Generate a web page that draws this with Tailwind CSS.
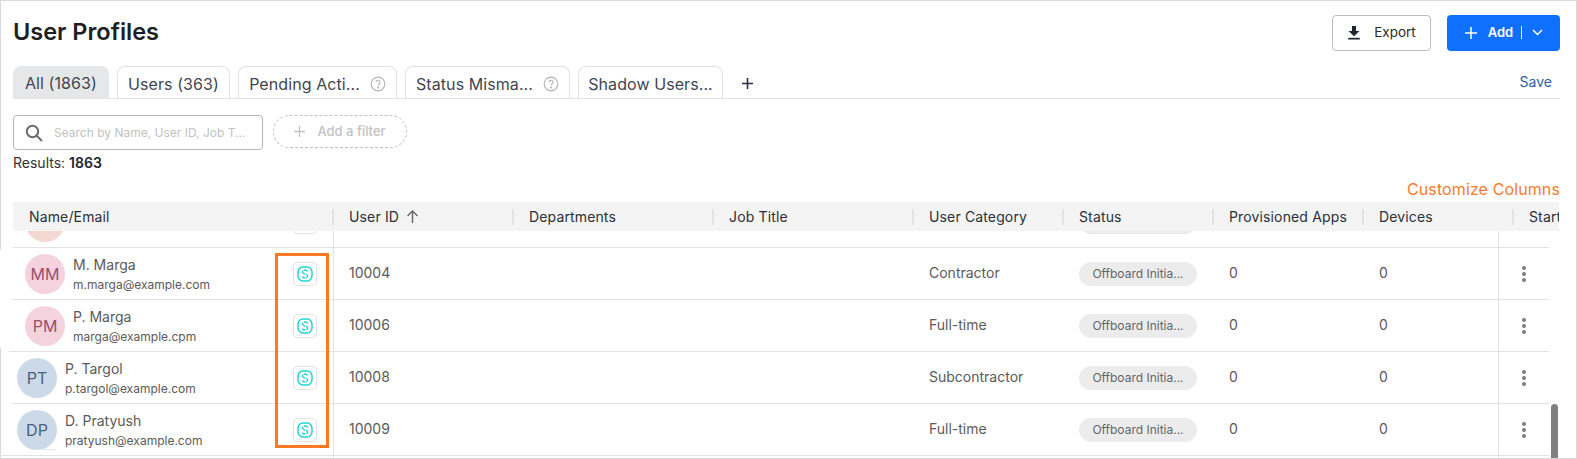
<!DOCTYPE html>
<html>
<head>
<meta charset="utf-8">
<script src="https://cdn.jsdelivr.net/npm/@tailwindcss/browser@4"></script>
</head>
<body class="bg-white">
<div class="relative w-[1577px] h-[459px] overflow-hidden bg-white font-['Inter','Liberation_Sans',sans-serif] border-t border-r border-b border-[#d9d9d9]">
  <span class="absolute left-0 top-0 w-[1px] h-[249px] bg-[#d9d9d9]"></span>
  <span class="absolute left-0 top-[347px] w-[1px] h-[110px] bg-[#d9d9d9]"></span>

  <!-- header -->
  <div class="flex items-center justify-between pl-[13px] pr-[16px] pt-[13px] h-[50px]">
    <h1 class="-mt-[2px] text-[23.500px] leading-[36px] font-semibold text-[#1c1f24]">User Profiles</h1>
    <div class="flex gap-[16px]">
      <button class="flex items-center justify-center gap-[13px] w-[99px] h-[36px] rounded-[4px] border border-[#bdbdbd] bg-white text-[13.500px] text-[#2b2b2b]">
        <svg width="14" height="14" viewBox="0 0 14 14" fill="#1f2430"><path d="M5 0h4v5h3.500L7 10.200 1.500 5H5z"/><rect x="1.200" y="11.800" width="11.600" height="1.700"/></svg>
        Export
      </button>
      <button class="flex items-center justify-center w-[113px] h-[36px] rounded-[4px] bg-[#0f6fff] text-[13px] font-semibold text-white">
        <svg width="14" height="14" viewBox="0 0 14 14" stroke="#fff" stroke-width="1.500" fill="none"><path d="M7 1v12M1 7h12"/></svg>
        <span class="ml-[10px]">Add</span>
        <span class="ml-[8px] w-[1px] h-[13px] bg-white"></span>
        <svg class="ml-[10px]" width="11" height="7" viewBox="0 0 11 7" stroke="#fff" stroke-width="1.500" fill="none"><path d="M1 1l4.500 4.500L10 1"/></svg>
      </button>
    </div>
  </div>

  <!-- tabs -->
  <div class="flex items-end mt-[15px] ml-[13px] mr-[16px] h-[33px] border-b border-[#e3e3e3] text-[16px] tracking-[0.005em] text-[#3f4652] whitespace-nowrap">
    <div class="flex items-center justify-center pt-[2px] w-[96px] h-[32px] rounded-t-[8px] bg-[#e6e7e9]">All (1863)</div>
    <div class="flex items-center justify-center pt-[2px] ml-[8px] w-[113px] h-[32px] rounded-t-[8px] border border-b-0 border-[#e3e3e3]">Users (363)</div>
    <div class="flex items-center justify-center pt-[2px] gap-[10px] ml-[8px] w-[159px] h-[32px] rounded-t-[8px] border border-b-0 border-[#e3e3e3]">Pending Acti...
      <svg width="16" height="16" viewBox="0 0 16 16" fill="none" stroke="#b5b5b5" stroke-width="1.200"><circle cx="8" cy="8" r="6.800"/><path d="M6 6.300a2 2 0 1 1 3 1.700c-.7.400-1 .8-1 1.500"/><circle cx="8" cy="11.600" r=".5" fill="#b5b5b5"/></svg>
    </div>
    <div class="flex items-center justify-center pt-[2px] gap-[10px] ml-[8px] w-[165px] h-[32px] rounded-t-[8px] border border-b-0 border-[#e3e3e3]">Status Misma...
      <svg width="16" height="16" viewBox="0 0 16 16" fill="none" stroke="#b5b5b5" stroke-width="1.200"><circle cx="8" cy="8" r="6.800"/><path d="M6 6.300a2 2 0 1 1 3 1.700c-.7.400-1 .8-1 1.500"/><circle cx="8" cy="11.600" r=".5" fill="#b5b5b5"/></svg>
    </div>
    <div class="flex items-center justify-center pt-[2px] ml-[8px] w-[145px] h-[32px] rounded-t-[8px] border border-b-0 border-[#e3e3e3]">Shadow Users...</div>
    <svg class="ml-[19px] mb-[9px]" width="11" height="11" viewBox="0 0 11 11" stroke="#2a2f45" stroke-width="1.600" fill="none"><path d="M5.500 0v11M0 5.500h11"/></svg>
    <span class="ml-auto mr-[8px] mb-[8px] text-[14px] tracking-normal leading-[16px] text-[#2f5fa8]">Save</span>
  </div>

  <!-- filters -->
  <div class="flex items-start gap-[10px] ml-[13px] mt-[16px]">
    <div class="flex items-center w-[250px] h-[35px] rounded-[4px] border border-[#b5b5b5] pl-[11px] overflow-hidden">
      <svg class="shrink-0" width="18" height="18" viewBox="0 0 18 18" fill="none" stroke="#6b6b6b" stroke-width="2"><circle cx="7.500" cy="7.500" r="5.700"/><path d="M11.700 11.700L17 17"/></svg>
      <span class="ml-[11px] text-[12px] text-[#c2c2c2] whitespace-nowrap">Search by Name, User ID, Job T...</span>
    </div>
    <div class="flex items-center justify-center gap-[12px] w-[134px] h-[33px] rounded-full border border-dashed border-[#c4c4c4] text-[13px] font-medium text-[#c2c2c2]">
      <svg width="11" height="11" viewBox="0 0 11 11" stroke="#c2c2c2" stroke-width="1.300" fill="none"><path d="M5.500 0v11M0 5.500h11"/></svg>
      Add a filter
    </div>
  </div>
  <p class="ml-[13px] mt-[3px] text-[14px] leading-[20px] text-[#333]">Results: <span class="font-semibold text-[#1f2430]">1863</span></p>

  <div class="mr-[16px] mt-[6px] text-right text-[16px] tracking-[0.007em] leading-[20px] text-[#f97a2b]">Customize Columns</div>

  <!-- table header -->
  <div class="ml-[13px] mr-[17px] mt-[3px] h-[29px] bg-[#f4f4f4] overflow-hidden grid grid-cols-[319px_180px_200px_200px_150px_150px_150px_150px_150px] items-center text-[14px] tracking-[0.01em] text-[#2a2f38] whitespace-nowrap">
    <div class="pl-[16px]">Name/Email</div>
    <div class="pl-[15px] border-l-2 border-[#e2e2e2] h-[16px] leading-[16px] flex items-center gap-[7px]">User ID
      <svg width="13" height="13" viewBox="0 0 13 13" fill="none" stroke="#666" stroke-width="1.400"><path d="M6.500 13V1M1.500 6L6.500 1l5 5"/></svg>
    </div>
    <div class="pl-[15px] border-l-2 border-[#e2e2e2] h-[16px] leading-[16px]">Departments</div>
    <div class="pl-[15px] border-l-2 border-[#e2e2e2] h-[16px] leading-[16px]">Job Title</div>
    <div class="pl-[15px] border-l-2 border-[#e2e2e2] h-[16px] leading-[16px]">User Category</div>
    <div class="pl-[15px] border-l-2 border-[#e2e2e2] h-[16px] leading-[16px]">Status</div>
    <div class="pl-[15px] border-l-2 border-[#e2e2e2] h-[16px] leading-[16px]">Provisioned Apps</div>
    <div class="pl-[15px] border-l-2 border-[#e2e2e2] h-[16px] leading-[16px]">Devices</div>
    <div class="pl-[15px] border-l-2 border-[#e2e2e2] h-[16px] leading-[16px]">Start Date</div>
  </div>

  <!-- table body -->
  <div class="relative h-[228px] overflow-hidden">
    <div class="mt-[-35px] text-[14px] text-[#5a5a5a]">
      <!-- clipped row -->
      <div class="ml-[13px] w-[1536px] h-[52px] border-b border-[#e3e3e3] grid grid-cols-[320px_730px_1fr] items-center">
        <div class="flex items-center justify-between pl-[12px] pr-[16px]">
          <span class="w-[40px] h-[40px] rounded-full bg-[#f4d9d2]"></span>
          <span class="w-[24px] h-[24px] rounded-[4px] border border-[#e3e3e3]"></span>
        </div>
        <div></div>
        <div class="pl-[16px]"><span class="block w-[118px] h-[24px] rounded-full bg-[#ececec] border border-[#e5e5e5]"></span></div>
      </div>

      <!-- M. Marga -->
      <div class="ml-[13px] w-[1536px] h-[52px] border-b border-[#e3e3e3] grid grid-cols-[320px_180px_200px_200px_150px_150px_150px_150px_36px] items-center">
        <div class="flex items-center pl-[12px] pr-[16px]">
          <span class="flex items-center justify-center w-[40px] h-[40px] rounded-full bg-[#f4d3df] text-[16px] text-[#99506f]">MM</span>
          <div class="ml-[8px] pt-[2px]"><p class="text-[14px] leading-[20px]">M. Marga</p><p class="text-[12px] leading-[20px]">m.marga@example.com</p></div>
          <span class="ml-auto flex items-center justify-center w-[24px] h-[24px] rounded-[4px] border border-[#e3e3e3]"><svg width="16" height="16" viewBox="0 0 16 16" fill="none" stroke="#1fd0d8" stroke-width="1.400"><rect x="1" y="1" width="14" height="14" rx="5"/><path d="M10.500 5.500c-.3-1-1.300-1.500-2.500-1.500-1.500 0-2.500.9-2.500 2 0 2.500 5 1.500 5 4 0 1.100-1 2-2.500 2-1.200 0-2.200-.5-2.500-1.500" stroke-dasharray="4.500 1"/></svg></span>
        </div>
        <div class="pl-[16px] pb-[2px]">10004</div><div></div><div></div>
        <div class="pl-[16px] pb-[2px]">Contractor</div>
        <div class="pl-[16px]"><span class="flex items-center justify-center w-[118px] h-[24px] rounded-full bg-[#ececec] text-[12px] text-[#666]">Offboard Initia...</span></div>
        <div class="pl-[16px] pb-[2px]">0</div><div class="pl-[16px] pb-[2px]">0</div>
        <div class="flex pl-[9px]"><svg width="4" height="16" viewBox="0 0 4 16" fill="#7a7a7a"><circle cx="2" cy="2" r="2"/><circle cx="2" cy="8" r="2"/><circle cx="2" cy="14" r="2"/></svg></div>
      </div>

      <!-- P. Marga -->
      <div class="ml-[9px] w-[1540px] pl-[4px] h-[52px] border-b border-[#e3e3e3] grid grid-cols-[320px_180px_200px_200px_150px_150px_150px_150px_36px] items-center">
        <div class="flex items-center pl-[12px] pr-[16px]">
          <span class="flex items-center justify-center w-[40px] h-[40px] rounded-full bg-[#f4d3df] text-[16px] text-[#99506f]">PM</span>
          <div class="ml-[8px] pt-[2px]"><p class="text-[14px] leading-[20px]">P. Marga</p><p class="text-[12px] leading-[20px]">marga@example.cpm</p></div>
          <span class="ml-auto flex items-center justify-center w-[24px] h-[24px] rounded-[4px] border border-[#e3e3e3]"><svg width="16" height="16" viewBox="0 0 16 16" fill="none" stroke="#1fd0d8" stroke-width="1.400"><rect x="1" y="1" width="14" height="14" rx="5"/><path d="M10.500 5.500c-.3-1-1.300-1.500-2.500-1.500-1.500 0-2.500.9-2.500 2 0 2.500 5 1.500 5 4 0 1.100-1 2-2.500 2-1.200 0-2.200-.5-2.500-1.500" stroke-dasharray="4.500 1"/></svg></span>
        </div>
        <div class="pl-[16px] pb-[2px]">10006</div><div></div><div></div>
        <div class="pl-[16px] pb-[2px]">Full-time</div>
        <div class="pl-[16px]"><span class="flex items-center justify-center w-[118px] h-[24px] rounded-full bg-[#ececec] text-[12px] text-[#666]">Offboard Initia...</span></div>
        <div class="pl-[16px] pb-[2px]">0</div><div class="pl-[16px] pb-[2px]">0</div>
        <div class="flex pl-[9px]"><svg width="4" height="16" viewBox="0 0 4 16" fill="#7a7a7a"><circle cx="2" cy="2" r="2"/><circle cx="2" cy="8" r="2"/><circle cx="2" cy="14" r="2"/></svg></div>
      </div>

      <!-- P. Targol -->
      <div class="ml-[13px] w-[1536px] h-[52px] border-b border-[#e3e3e3] grid grid-cols-[320px_180px_200px_200px_150px_150px_150px_150px_36px] items-center">
        <div class="flex items-center pl-[4px] pr-[16px]">
          <span class="flex items-center justify-center w-[40px] h-[40px] rounded-full bg-[#ccd9e8] text-[16px] text-[#47607f]">PT</span>
          <div class="ml-[8px] pt-[2px]"><p class="text-[14px] leading-[20px]">P. Targol</p><p class="text-[12px] leading-[20px]">p.targol@example.com</p></div>
          <span class="ml-auto flex items-center justify-center w-[24px] h-[24px] rounded-[4px] border border-[#e3e3e3]"><svg width="16" height="16" viewBox="0 0 16 16" fill="none" stroke="#1fd0d8" stroke-width="1.400"><rect x="1" y="1" width="14" height="14" rx="5"/><path d="M10.500 5.500c-.3-1-1.300-1.500-2.500-1.500-1.500 0-2.500.9-2.500 2 0 2.500 5 1.500 5 4 0 1.100-1 2-2.500 2-1.200 0-2.200-.5-2.500-1.500" stroke-dasharray="4.500 1"/></svg></span>
        </div>
        <div class="pl-[16px] pb-[2px]">10008</div><div></div><div></div>
        <div class="pl-[16px] pb-[2px]">Subcontractor</div>
        <div class="pl-[16px]"><span class="flex items-center justify-center w-[118px] h-[24px] rounded-full bg-[#ececec] text-[12px] text-[#666]">Offboard Initia...</span></div>
        <div class="pl-[16px] pb-[2px]">0</div><div class="pl-[16px] pb-[2px]">0</div>
        <div class="flex pl-[9px]"><svg width="4" height="16" viewBox="0 0 4 16" fill="#7a7a7a"><circle cx="2" cy="2" r="2"/><circle cx="2" cy="8" r="2"/><circle cx="2" cy="14" r="2"/></svg></div>
      </div>

      <!-- D. Pratyush -->
      <div class="w-[1549px] pl-[13px] h-[52px] border-b border-[#e3e3e3] grid grid-cols-[320px_180px_200px_200px_150px_150px_150px_150px_36px] items-center">
        <div class="flex items-center pl-[4px] pr-[16px]">
          <span class="flex items-center justify-center w-[40px] h-[40px] rounded-full bg-[#ccd9e8] text-[16px] text-[#47607f]">DP</span>
          <div class="ml-[8px] pt-[2px]"><p class="text-[14px] leading-[20px]">D. Pratyush</p><p class="text-[12px] leading-[20px]">pratyush@example.com</p></div>
          <span class="ml-auto flex items-center justify-center w-[24px] h-[24px] rounded-[4px] border border-[#e3e3e3]"><svg width="16" height="16" viewBox="0 0 16 16" fill="none" stroke="#1fd0d8" stroke-width="1.400"><rect x="1" y="1" width="14" height="14" rx="5"/><path d="M10.500 5.500c-.3-1-1.300-1.500-2.500-1.500-1.500 0-2.500.9-2.500 2 0 2.500 5 1.500 5 4 0 1.100-1 2-2.500 2-1.200 0-2.200-.5-2.500-1.500" stroke-dasharray="4.500 1"/></svg></span>
        </div>
        <div class="pl-[16px] pb-[2px]">10009</div><div></div><div></div>
        <div class="pl-[16px] pb-[2px]">Full-time</div>
        <div class="pl-[16px]"><span class="flex items-center justify-center w-[118px] h-[24px] rounded-full bg-[#ececec] text-[12px] text-[#666]">Offboard Initia...</span></div>
        <div class="pl-[16px] pb-[2px]">0</div><div class="pl-[16px] pb-[2px]">0</div>
        <div class="flex pl-[9px]"><svg width="4" height="16" viewBox="0 0 4 16" fill="#7a7a7a"><circle cx="2" cy="2" r="2"/><circle cx="2" cy="8" r="2"/><circle cx="2" cy="14" r="2"/></svg></div>
      </div>
    </div>
    <!-- frozen column edges, scrollbar, avatar sliver -->
    <span class="absolute left-[333px] top-0 bottom-0 w-[1px] bg-[#e3e3e3]"></span>
    <span class="absolute left-[1498px] top-0 bottom-0 w-[1px] bg-[#e3e3e3]"></span>
    <span class="absolute left-[1551px] top-[173px] bottom-0 w-[7px] rounded-t-full bg-[#808080]"></span>
    <span class="absolute left-[43px] top-[218px] w-[12px] h-[1px] bg-[#dbe4ef]"></span>
  </div>

  <!-- annotation -->
  <span class="absolute left-[275px] top-[252px] w-[54px] h-[195px] border-[3px] border-[#f97a23]"></span>
</div>
</body>
</html>
